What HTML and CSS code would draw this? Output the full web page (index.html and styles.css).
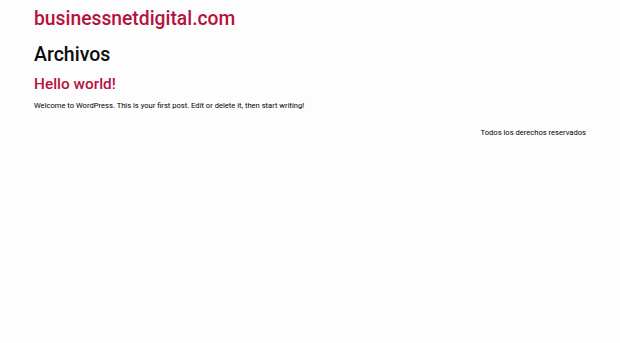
FILE: index.html
```html
<!DOCTYPE html>
<html lang="es">
<head>
    <meta charset="UTF-8">
    <meta name="viewport" content="width=device-width, initial-scale=1.0">
    <title>Archivos - businessnetdigital.com</title>
    <link rel="stylesheet" href="styles.css">
</head>
<body>
    <header class="site-header">
        <a class="site-title" href="#">businessnetdigital.com</a>
    </header>

    <main class="site-main">
        <h1 class="page-title">Archivos</h1>
        <article class="post">
            <h2 class="entry-title"><a href="#">Hello world!</a></h2>
            <p>Welcome to WordPress. This is your first post. Edit or delete it, then start writing!</p>
        </article>
    </main>

    <footer class="site-footer">
        <p>Todos los derechos reservados</p>
    </footer>
</body>
</html>
```

FILE: styles.css
```css
body {
    margin: 0;
    padding: 0 34px;
    font-family: Roboto, "Liberation Sans", sans-serif;
    background-color: #fdfdfd;
    color: #111;
    font-size: 7.6px;
}
a {
    color: #b5123e;
    text-decoration: none;
}
.site-header {
    padding-top: 7px;
}
.site-title {
    font-size: 19.3px;
    font-weight: 500;
    line-height: 24px;
}
.page-title {
    margin: 12px 0 0;
    font-size: 19.5px;
    font-weight: 500;
    line-height: 24px;
    color: #0d0d0d;
}
.entry-title {
    margin: 7px 0 0;
    font-size: 15.4px;
    font-weight: 500;
    line-height: 20px;
}
.post p {
    margin: 6px 0 0;
    line-height: 12px;
    color: #000;
}
.site-footer {
    display: flex;
    justify-content: flex-end;
}
.site-footer p {
    margin: 15px 0 0;
    line-height: 12px;
    color: #000;
}
```
